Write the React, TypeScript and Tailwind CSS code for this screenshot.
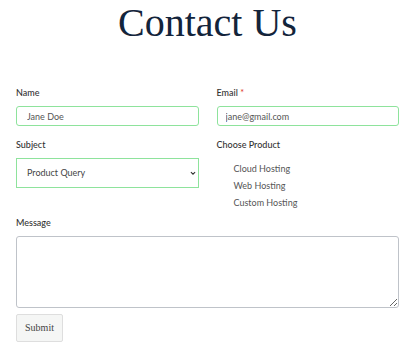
import React from "react";

const products = ["Cloud Hosting", "Web Hosting", "Custom Hosting"];

const App = () => {
    return (
        <div className="w-[415px] h-[350px] bg-white overflow-hidden font-['Lato','Open_Sans',sans-serif]">
            {/* Title */}
            <h1 className="pt-[3px] text-center text-[40px] leading-none text-[#13243b] font-['Liberation_Serif',serif]">
                Contact Us
            </h1>

            <form className="px-4 mt-[43px] flex flex-col">
                {/* Name / Email */}
                <div className="grid grid-cols-2 gap-x-[18px]">
                    <div className="flex flex-col">
                        <label className="text-[9px] leading-[13px] font-medium text-[#333] mb-[7px]">Name</label>
                        <input
                            defaultValue="Jane Doe"
                            className="h-[20px] px-[10px] text-[9px] text-[#555] border border-[#8ee39c] rounded-[3px] outline-none"
                        />
                    </div>
                    <div className="flex flex-col">
                        <label className="text-[9px] leading-[13px] font-medium text-[#333] mb-[7px]">
                            Email <span className="text-[#e0352b]">*</span>
                        </label>
                        <input
                            defaultValue="jane@gmail.com"
                            className="h-[20px] px-[8px] text-[9px] text-[#555] border border-[#8ee39c] rounded-[3px] outline-none"
                        />
                    </div>
                </div>

                {/* Subject / Product */}
                <div className="grid grid-cols-2 gap-x-[18px] mt-[12px]">
                    <div className="flex flex-col">
                        <label className="text-[9px] leading-[13px] font-medium text-[#333] mb-[7px]">Subject</label>
                        <div className="relative">
                            <select
                                defaultValue="Product Query"
                                className="w-full h-[30px] pl-[10px] pr-6 appearance-none text-[9px] text-[#444] bg-white border border-[#8ee39c] outline-none"
                            >
                                <option>Product Query</option>
                                <option>General Query</option>
                            </select>
                            <svg
                                viewBox="0 0 10 10"
                                className="absolute right-[3px] top-[12px] w-[6px] h-[6px] pointer-events-none"
                            >
                                <path d="M1.5 3.5 L5 7 L8.5 3.5" fill="none" stroke="#333" strokeWidth="1.8" />
                            </svg>
                        </div>
                    </div>
                    <div className="flex flex-col">
                        <label className="text-[9px] leading-[13px] font-medium text-[#333]">Choose Product</label>
                        <ul className="mt-[9px] pl-[17px] flex flex-col">
                            {products.map((p) => (
                                <li key={p} className="text-[9px] leading-[17px] text-[#555]">
                                    {p}
                                </li>
                            ))}
                        </ul>
                    </div>
                </div>

                {/* Message */}
                <label className="mt-[5px] text-[9px] leading-[13px] font-medium text-[#333] mb-[7px]">Message</label>
                <textarea className="h-[72px] border border-[#bfc3c9] rounded-[3px] outline-none resize" />

                <div className="mt-[5px]">
                    <button
                        type="button"
                        className="w-[47px] h-[28px] bg-[#f5f6f5] border border-[#dedede] rounded-[2px] text-[10px] text-[#444] font-['Liberation_Serif',serif]"
                    >
                        Submit
                    </button>
                </div>
            </form>
        </div>
    );
};

export default App;
